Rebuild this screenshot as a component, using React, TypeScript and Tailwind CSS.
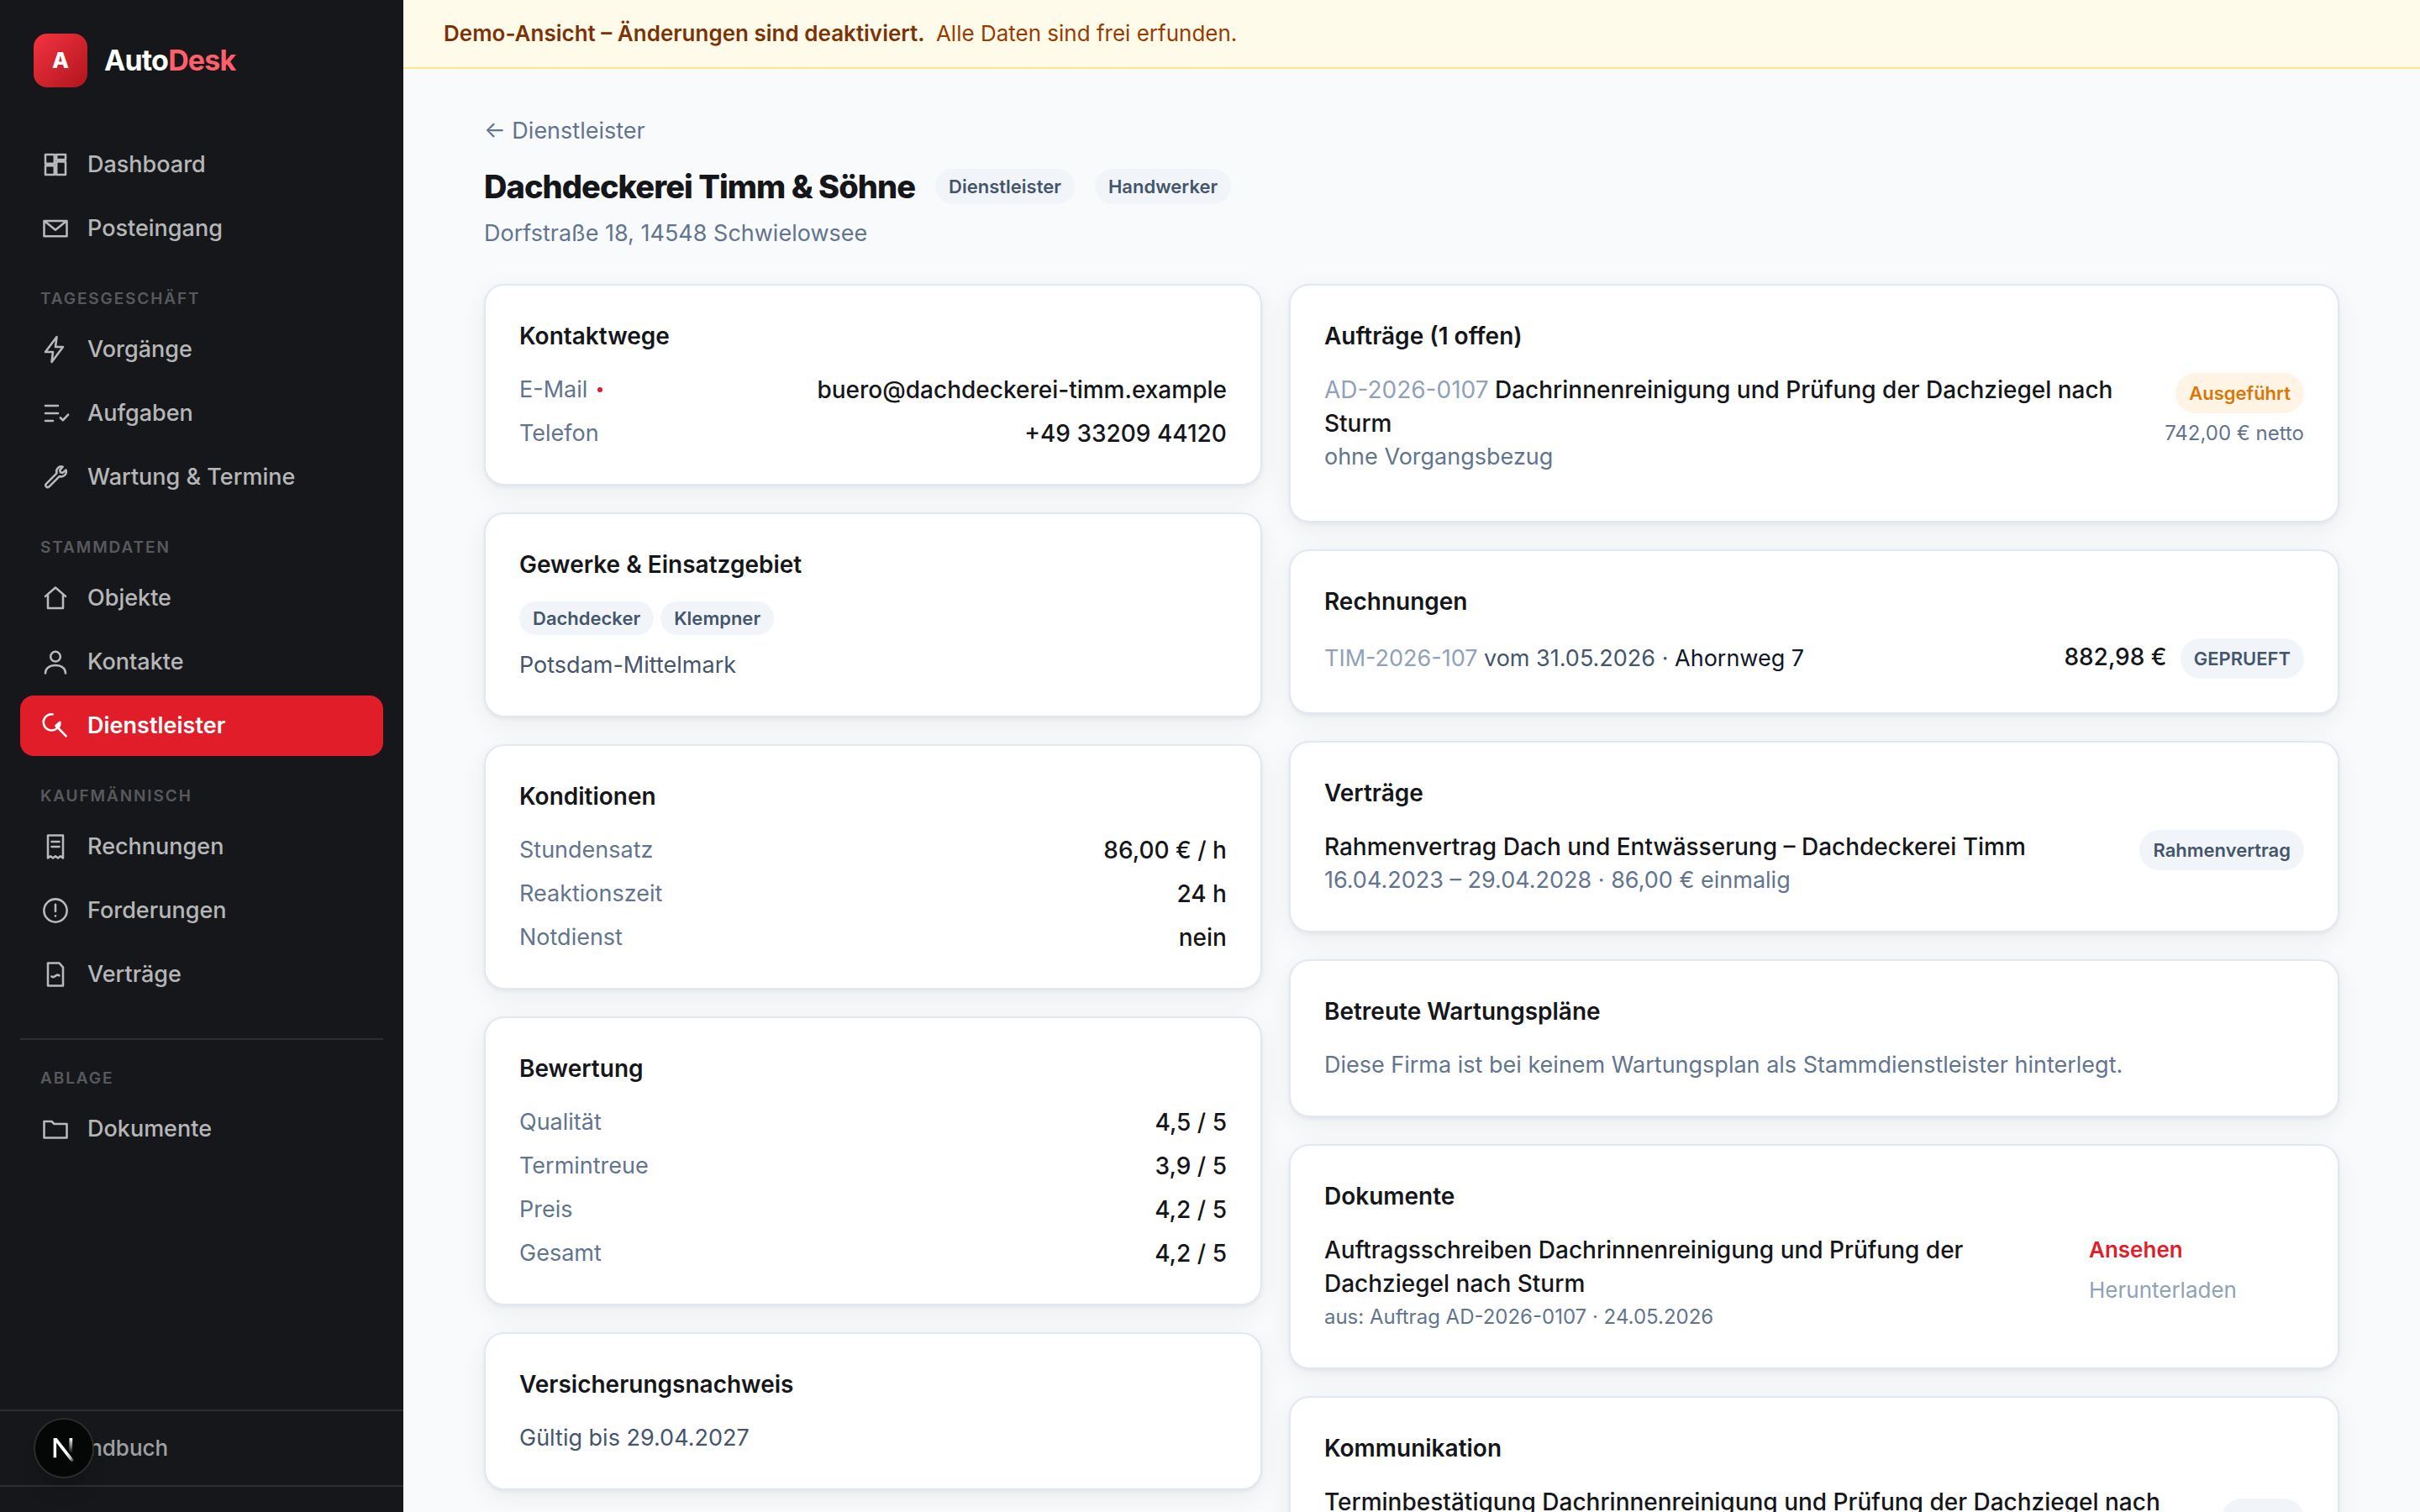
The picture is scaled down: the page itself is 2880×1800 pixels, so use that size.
import React from 'react';

type IconName =
    | 'dashboard'
    | 'mail'
    | 'bolt'
    | 'tasks'
    | 'wrench'
    | 'home'
    | 'user'
    | 'service'
    | 'receipt'
    | 'alert'
    | 'contract'
    | 'folder';

interface NavItemType {
    label: string;
    icon: IconName;
    active?: boolean;
}

interface NavSectionType {
    title: string;
    items: NavItemType[];
    divider?: boolean;
}

const mainItems: NavItemType[] = [
    { label: 'Dashboard', icon: 'dashboard' },
    { label: 'Posteingang', icon: 'mail' },
];

const sections: NavSectionType[] = [
    {
        title: 'Tagesgeschäft',
        items: [
            { label: 'Vorgänge', icon: 'bolt' },
            { label: 'Aufgaben', icon: 'tasks' },
            { label: 'Wartung & Termine', icon: 'wrench' },
        ],
    },
    {
        title: 'Stammdaten',
        items: [
            { label: 'Objekte', icon: 'home' },
            { label: 'Kontakte', icon: 'user' },
            { label: 'Dienstleister', icon: 'service', active: true },
        ],
    },
    {
        title: 'Kaufmännisch',
        items: [
            { label: 'Rechnungen', icon: 'receipt' },
            { label: 'Forderungen', icon: 'alert' },
            { label: 'Verträge', icon: 'contract' },
        ],
    },
    {
        title: 'Ablage',
        items: [{ label: 'Dokumente', icon: 'folder' }],
        divider: true,
    },
];

const icons: Record<IconName, React.ReactNode> = {
    dashboard: <path d="M4 4h7.2v7.2H4zM12.8 4H20v4h-7.2zM12.8 9.6H20V20h-7.2zM4 12.8h7.2V20H4z" />,
    mail: <path d="M3 6h18v12.2H3zM3.6 6.4 12 13.2l8.4-6.8" />,
    bolt: <path d="M13 2 4 14h6l-1 8 9-12h-6l1-8z" />,
    tasks: <path d="M4 6h10M4 12h10M4 18h6M15.9 15.5l2 2 4.2-4.4" />,
    wrench: (
        <path d="M17.8 3.8a3.9 3.9 0 0 0-4.8 5.1l-8.4 8.5a1.6 1.6 0 0 0 2.2 2.3l8.5-8.4a3.9 3.9 0 0 0 5-5l-2.6 2.3-1.8-.4-.4-1.8 2.3-2.6z" />
    ),
    home: <path d="M4 10.6 12 3.7l8 6.9M6 9.2V20h12V9.2" />,
    user: (
        <>
            <circle cx="12" cy="7.8" r="3.9" />
            <path d="M4 21c0-4 3.4-6.3 8-6.3s8 2.3 8 6.3" />
        </>
    ),
    service: (
        <>
            <path d="M9.8 2.9a6.4 6.4 0 1 0 3.4 11.1" />
            <path d="M15.6 9.2 12.3 12l1.2 1.2 1.8-1z" fill="currentColor" />
            <path d="M13 12.5l7.4 7.8" />
        </>
    ),
    receipt: <path d="M6 3h12v18l-2-1.5-2 1.5-2-1.5-2 1.5-2-1.5L6 21zM9 8h6M9 12h6" />,
    alert: (
        <>
            <circle cx="12" cy="12" r="9.1" />
            <path d="M12 7.2v5.4M12 16.2v.1" />
        </>
    ),
    contract: <path d="M6 3h9l3 3.4V21H6zM9 13.6c1 .8 2 .5 3-.4s2-1 3-.3" />,
    folder: <path d="M3 6h6l2 2h10v11H3z" />,
};

const Icon = ({ name }: { name: IconName }) => (
    <svg
        viewBox="0 0 24 24"
        className="w-9 h-9 shrink-0"
        fill="none"
        stroke="currentColor"
        strokeWidth="1.7"
        strokeLinecap="round"
        strokeLinejoin="round"
        aria-hidden="true"
    >
        {icons[name]}
    </svg>
);

const NavLink = ({ label, icon, active }: NavItemType) => (
    <a
        href="#"
        className={
            active
                ? 'flex items-center gap-5 h-18 px-6 rounded-2xl bg-[#e11d2a] font-semibold text-white'
                : 'flex items-center gap-5 h-18 px-6 rounded-2xl text-white/70'
        }
    >
        <Icon name={icon} />
        <span>{label}</span>
    </a>
);

const Sidebar = () => (
    <aside className="flex flex-col w-[480px] shrink-0 bg-[#16171b]">
        <div className="flex items-center gap-5 px-10 pt-10">
            <div className="flex items-center justify-center w-16 h-16 rounded-2xl bg-linear-to-br from-[#f5333f] to-[#b0141f] text-[26px] font-extrabold text-white">
                A
            </div>
            <div className="text-[34px] leading-10 font-bold tracking-tight text-white">
                Auto<span className="text-[#ff5f6b]">Desk</span>
            </div>
        </div>
        <nav className="flex flex-col gap-1 px-6 mt-14 text-[27px] font-medium">
            {mainItems.map((item) => (
                <NavLink
                    key={item.label}
                    {...item}
                />
            ))}
            {sections.map((section) => (
                <div
                    key={section.title}
                    className={
                        section.divider
                            ? 'flex flex-col gap-1 mt-9 border-t-2 border-white/10 pt-8'
                            : 'flex flex-col gap-1 pt-[30px]'
                    }
                >
                    <div className="px-6 pb-1.5 text-[19px] leading-7 font-semibold uppercase tracking-widest text-white/30">
                        {section.title}
                    </div>
                    {section.items.map((item) => (
                        <NavLink
                            key={item.label}
                            {...item}
                        />
                    ))}
                </div>
            ))}
        </nav>
        <div className="relative mt-auto mb-[30px] border-y-2 border-white/10">
            <a
                href="#"
                className="flex items-center h-22 pl-18 text-[26px] font-medium text-white/60"
            >
                Handbuch
            </a>
            <button
                type="button"
                aria-label="Dev Tools"
                className="absolute left-10 top-2 w-18 h-18 rounded-full border-2 border-[#2b2b2b] bg-[#050706] shadow-xl"
            >
                <svg
                    viewBox="0 0 34 34"
                    fill="none"
                    aria-hidden="true"
                >
                    <defs>
                        <linearGradient
                            id="diagonal"
                            x1="9.4"
                            y1="10.2"
                            x2="13.3"
                            y2="15.2"
                            gradientUnits="userSpaceOnUse"
                        >
                            <stop stopColor="white" />
                            <stop
                                offset="0.6"
                                stopColor="white"
                                stopOpacity="0.7"
                            />
                            <stop
                                offset="1"
                                stopColor="white"
                                stopOpacity="0"
                            />
                        </linearGradient>
                        <linearGradient
                            id="stem"
                            x1="12"
                            y1="1"
                            x2="12"
                            y2="10"
                            gradientUnits="userSpaceOnUse"
                        >
                            <stop stopColor="white" />
                            <stop
                                offset="1"
                                stopColor="white"
                                stopOpacity="0"
                            />
                        </linearGradient>
                        <clipPath id="mark">
                            <rect
                                x="1.4"
                                y="1"
                                width="13"
                                height="15"
                            />
                        </clipPath>
                    </defs>
                    <g
                        transform="translate(9.3 10)"
                        strokeWidth="1.86"
                        clipPath="url(#mark)"
                    >
                        <path
                            d="M13.3 15.2 2.34 1v11.6"
                            stroke="url(#diagonal)"
                        />
                        <path
                            d="M11.9 1 11.8 10"
                            stroke="url(#stem)"
                        />
                    </g>
                </svg>
            </button>
        </div>
    </aside>
);

const Card = ({ title, children }: { title: string; children: React.ReactNode }) => (
    <section className="p-10 bg-white border-2 border-slate-200 rounded-3xl shadow-[0_2px_4px_rgba(15,17,21,0.05),0_8px_32px_rgba(15,17,21,0.06)]">
        <h2 className="mb-6 font-semibold">{title}</h2>
        {children}
    </section>
);

const Pill = ({ children, className }: { children?: React.ReactNode; className: string }) => (
    <span
        className={`inline-block px-4 rounded-full text-[22px] font-semibold whitespace-nowrap ${className}`}
    >
        {children}
    </span>
);

const GREY = 'bg-slate-100 text-slate-600';

interface RowType {
    label: string;
    value: string;
    primary?: boolean;
}

const Rows = ({ rows }: { rows: RowType[] }) => (
    <dl className="flex flex-col gap-3">
        {rows.map((row) => (
            <div
                key={row.label}
                className="flex justify-between"
            >
                <dt className="flex items-center gap-3 text-[27px] text-slate-500">
                    {row.label}
                    {row.primary && <span className="w-1.5 h-1.5 rounded-full bg-[#e11d2a]" />}
                </dt>
                <dd className="font-medium">{row.value}</dd>
            </div>
        ))}
    </dl>
);

const App = () => {
    return (
        <div className="flex h-screen overflow-hidden bg-[#f8fafc] font-[Inter,sans-serif] text-[28px] leading-10 text-[#15161a]">
            <Sidebar />
            <div className="flex-1 min-w-0">
                <div className="px-12 py-5 border-b-2 border-amber-200 bg-amber-50 text-[26px] text-amber-800">
                    <strong className="font-semibold text-amber-900">
                        Demo-Ansicht – Änderungen sind deaktiviert.
                    </strong>{' '}
                    <span className="ml-1.5">Alle Daten sind frei erfunden.</span>
                </div>
                <main className="px-24 pt-14">
                    <a
                        href="#"
                        className="block text-[27px] leading-9 text-slate-500"
                    >
                        ← Dienstleister
                    </a>
                    <div className="flex items-center gap-6 mt-6">
                        <h1 className="text-[38px] leading-12 font-extrabold tracking-tight">
                            Dachdeckerei Timm & Söhne
                        </h1>
                        <Pill className={`leading-[42px] ${GREY}`}>Dienstleister</Pill>
                        <Pill className={`leading-[42px] ${GREY}`}>Handwerker</Pill>
                    </div>
                    <p className="mt-3 text-[27px] text-slate-500">Dorfstraße 18, 14548 Schwielowsee</p>

                    <div className="grid grid-cols-[20fr_27fr] items-start gap-8 mt-10">
                        <div className="flex flex-col gap-8">
                            <Card title="Kontaktwege">
                                <Rows
                                    rows={[
                                        { label: 'E-Mail', value: 'buero@dachdeckerei-timm.example', primary: true },
                                        { label: 'Telefon', value: '+49 33209 44120' },
                                    ]}
                                />
                            </Card>
                            <Card title="Gewerke & Einsatzgebiet">
                                <div className="flex gap-2">
                                    <Pill className={GREY}>Dachdecker</Pill>
                                    <Pill className={GREY}>Klempner</Pill>
                                </div>
                                <p className="mt-4 text-[27px] text-slate-600">Potsdam-Mittelmark</p>
                            </Card>
                            <Card title="Konditionen">
                                <Rows
                                    rows={[
                                        { label: 'Stundensatz', value: '86,00 € / h' },
                                        { label: 'Reaktionszeit', value: '24 h' },
                                        { label: 'Notdienst', value: 'nein' },
                                    ]}
                                />
                            </Card>
                            <Card title="Bewertung">
                                <Rows
                                    rows={[
                                        { label: 'Qualität', value: '4,5 / 5' },
                                        { label: 'Termintreue', value: '3,9 / 5' },
                                        { label: 'Preis', value: '4,2 / 5' },
                                        { label: 'Gesamt', value: '4,2 / 5' },
                                    ]}
                                />
                            </Card>
                            <Card title="Versicherungsnachweis">
                                <p className="text-[27px] text-slate-600">Gültig bis 29.04.2027</p>
                            </Card>
                        </div>

                        <div className="flex flex-col gap-8">
                            <Card title="Aufträge (1 offen)">
                                <div className="flex items-start justify-between gap-6 pb-4">
                                    <div>
                                        <p className="font-medium">
                                            <span className="font-normal text-slate-400">AD-2026-0107</span>{' '}
                                            Dachrinnenreinigung und Prüfung der Dachziegel nach Sturm
                                        </p>
                                        <p className="text-[27px] text-slate-500">ohne Vorgangsbezug</p>
                                    </div>
                                    <div className="flex flex-col items-end gap-1 shrink-0">
                                        <Pill className="py-1 bg-[#fff4e5] text-[#d97706]">Ausgeführt</Pill>
                                        <span className="text-[24px] text-slate-500">742,00 € netto</span>
                                    </div>
                                </div>
                            </Card>
                            <Card title="Rechnungen">
                                <div className="flex items-center justify-between">
                                    <p className="text-[27px] text-slate-600">
                                        <span className="text-slate-400">TIM-2026-107</span> vom 31.05.2026 ·{' '}
                                        <a
                                            href="#"
                                            className="text-slate-900"
                                        >
                                            Ahornweg 7
                                        </a>
                                    </p>
                                    <div className="flex items-baseline gap-4">
                                        <span className="font-medium">882,98 €</span>
                                        <Pill className={`py-1 ${GREY}`}>GEPRUEFT</Pill>
                                    </div>
                                </div>
                            </Card>
                            <Card title="Verträge">
                                <div className="flex items-start justify-between">
                                    <div>
                                        <p className="font-medium">
                                            Rahmenvertrag Dach und Entwässerung – Dachdeckerei Timm
                                        </p>
                                        <p className="text-[27px] text-slate-500">
                                            16.04.2023 – 29.04.2028 · 86,00 € einmalig
                                        </p>
                                    </div>
                                    <Pill className={`py-1 ${GREY}`}>Rahmenvertrag</Pill>
                                </div>
                            </Card>
                            <Card title="Betreute Wartungspläne">
                                <p className="text-[27px] text-slate-500">
                                    Diese Firma ist bei keinem Wartungsplan als Stammdienstleister hinterlegt.
                                </p>
                            </Card>
                            <Card title="Dokumente">
                                <div className="flex gap-8">
                                    <div className="flex-1">
                                        <p className="font-medium">
                                            Auftragsschreiben Dachrinnenreinigung und Prüfung der Dachziegel nach Sturm
                                        </p>
                                        <p className="text-[24px] text-slate-500">
                                            aus: Auftrag AD-2026-0107 · 24.05.2026
                                        </p>
                                    </div>
                                    <div className="flex flex-col gap-2 w-64 text-[26px]">
                                        <a
                                            href="#"
                                            className="font-semibold text-[#e11d2a]"
                                        >
                                            Ansehen
                                        </a>
                                        <a
                                            href="#"
                                            className="text-slate-400"
                                        >
                                            Herunterladen
                                        </a>
                                    </div>
                                </div>
                            </Card>
                            <Card title="Kommunikation">
                                <div className="flex items-center justify-between gap-6">
                                    <p className="font-medium">
                                        Terminbestätigung Dachrinnenreinigung und Prüfung der Dachziegel nach Sturm
                                    </p>
                                    <Pill className={`w-[98px] h-12 shrink-0 ${GREY}`} />
                                </div>
                            </Card>
                        </div>
                    </div>
                </main>
            </div>
        </div>
    );
};

export default App;
